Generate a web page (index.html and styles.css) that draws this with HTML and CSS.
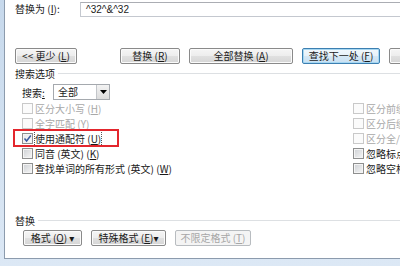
FILE: index.html
```html
<!DOCTYPE html>
<html lang="zh-CN">
<head>
    <meta charset="UTF-8">
    <meta name="viewport" content="width=device-width, initial-scale=1.0">
    <title>查找和替换</title>
    <link rel="stylesheet" href="styles.css">
</head>
<body>
    <div class="dialog">
        <div class="replace-row">
            <label class="field-label">替换为 (<u>I</u>):</label>
            <div class="textbox">^32^&amp;^32</div>
        </div>

        <div class="button-row">
            <button class="btn btn-more">&lt;&lt; 更少 (<u>L</u>)</button>
            <button class="btn btn-replace">替换 (<u>R</u>)</button>
            <button class="btn btn-all">全部替换 (<u>A</u>)</button>
            <button class="btn btn-next btn-default">查找下一处 (<u>F</u>)</button>
            <button class="btn btn-cancel" aria-label="取消"></button>
        </div>

        <div class="group-title">搜索选项</div>

        <div class="search-row">
            <span class="search-label">搜索<u>:</u></span>
            <div class="combo">
                <span class="combo-text">全部</span>
                <span class="combo-btn">
                    <svg width="7" height="4" viewBox="0 0 7 4"><path d="M0 0h7L3.5 4z" fill="#000"/></svg>
                </span>
            </div>
        </div>

        <div class="options">
            <div class="col col-left">
                <div class="opt disabled"><span class="cb"></span>区分大小写 (<u>H</u>)</div>
                <div class="opt disabled"><span class="cb"></span>全字匹配 (<u>Y</u>)</div>
                <div class="opt marked">
                    <span class="cb checked">
                        <svg width="9" height="9" viewBox="0 0 9 9"><path d="M1.5 4.5L3.6 7L7.8 1.5" fill="none" stroke="#3a5a9e" stroke-width="1.5"/></svg>
                    </span>
                    <span class="focus">使用通配符 (<u>U</u>)</span>
                    <span class="highlight"></span>
                </div>
                <div class="opt"><span class="cb"></span>同音 (英文) (<u>K</u>)</div>
                <div class="opt"><span class="cb"></span>查找单词的所有形式 (英文) (<u>W</u>)</div>
            </div>
            <div class="col col-right">
                <div class="opt disabled"><span class="cb"></span>区分前缀 (<u>X</u>)</div>
                <div class="opt disabled"><span class="cb"></span>区分后缀 (<u>T</u>)</div>
                <div class="opt disabled"><span class="cb"></span>区分全/半角 (<u>M</u>)</div>
                <div class="opt"><span class="cb"></span>忽略标点符号 (<u>S</u>)</div>
                <div class="opt"><span class="cb"></span>忽略空格 (<u>W</u>)</div>
            </div>
        </div>

        <div class="group-title group-replace">替换</div>

        <div class="format-row">
            <button class="btn btn-format">格式 (<u>O</u>) ▾</button>
            <button class="btn btn-special">特殊格式 (<u>E</u>)▾</button>
            <button class="btn btn-noformat" disabled>不限定格式 (<u>T</u>)</button>
        </div>
    </div>
</body>
</html>
```

FILE: styles.css
```css
/* Word find & replace dialog, Win7 look */
body {
    margin: 0;
    width: 400px;
    height: 266px;
    overflow: hidden;
    background: linear-gradient(#c7d9ec, #dce8f5);
    font-family: "Noto Sans CJK SC", "DejaVu Sans", sans-serif;
    font-size: 10px;
    color: #1a1a1a;
}

u {
    text-decoration: underline;
}

.dialog {
    box-sizing: border-box;
    height: 259px;
    margin-left: 4px;
    padding-left: 10px;
    background: #fff;
    border-left: 1px solid #8c9bad;
    border-bottom: 1px solid #8c9bad;
    overflow: hidden;
}

.replace-row {
    display: flex;
    align-items: center;
    height: 16px;
    margin-top: 1px;
}

.field-label {
    width: 65px;
    flex-shrink: 0;
    line-height: 16px;
}

.textbox {
    box-sizing: border-box;
    width: 340px;
    height: 15px;
    flex-shrink: 0;
    padding-left: 5px;
    border: 1px solid #c4c8cf;
    border-top-color: #abadb3;
    font-family: "Liberation Sans", Arial, sans-serif;
    font-size: 10px;
    line-height: 13px;
    white-space: nowrap;
}

.button-row {
    display: flex;
    gap: 9px;
    margin-top: 31px;
    white-space: nowrap;
}

.btn {
    box-sizing: border-box;
    height: 16px;
    padding: 0;
    flex-shrink: 0;
    border: 1px solid #8a8a8a;
    border-radius: 2px;
    background: linear-gradient(#f5f5f5 0%, #ededed 50%, #e0e0e0 50%, #d6d6d6 100%);
    box-shadow: inset 0 0 0 1px #fbfbfb;
    font-family: inherit;
    font-size: 10px;
    line-height: 14px;
    color: #1a1a1a;
    text-align: center;
}

.btn-more {
    width: 62px;
    margin-right: 34px;
}

.btn-replace {
    width: 60px;
}

.btn-all {
    width: 104px;
}

.btn-next {
    width: 78px;
}

.btn-cancel {
    width: 60px;
}

.btn-default {
    border-color: #3c7fb1;
    background: linear-gradient(#f2f8fc 0%, #e7f1f9 50%, #d6e8f5 50%, #c9e0f2 100%);
    box-shadow: inset 0 0 0 1px #a6d7f2;
}

.btn:disabled {
    border-color: #b8bcc0;
    background: #f4f4f4;
    box-shadow: none;
    color: #a6a6a6;
}

.group-title {
    display: flex;
    align-items: center;
    height: 14px;
    margin-top: 2px;
    white-space: nowrap;
}

.group-title::after {
    content: "";
    flex: 1;
    margin-left: 3px;
    border-top: 1px solid #dde0e3;
}

.search-row {
    display: flex;
    align-items: center;
    height: 16px;
    margin-top: 4px;
    padding-left: 7px;
}

.search-label {
    width: 31px;
}

.combo {
    box-sizing: border-box;
    display: flex;
    width: 57px;
    height: 16px;
    border: 1px solid #a5a9ae;
}

.combo-text {
    flex: 1;
    padding-left: 4px;
    line-height: 14px;
}

.combo-btn {
    box-sizing: border-box;
    display: flex;
    align-items: center;
    justify-content: center;
    width: 13px;
    border-left: 1px solid #c3c6ca;
    background: linear-gradient(#f3f3f3, #dcdcdc);
}

.options {
    display: flex;
    margin-top: 1px;
    padding-left: 7px;
    white-space: nowrap;
}

.col-left {
    width: 331px;
    flex-shrink: 0;
}

.opt {
    position: relative;
    display: flex;
    align-items: center;
    height: 15px;
}

.opt.disabled {
    color: #a8a8a8;
}

.cb {
    box-sizing: border-box;
    display: flex;
    align-items: center;
    justify-content: center;
    width: 11px;
    height: 11px;
    margin-right: 2px;
    flex-shrink: 0;
    border: 1px solid #8e8f8f;
    background: linear-gradient(135deg, #cdd0d4, #f6f6f6);
    box-shadow: inset 0 0 0 1px #f4f4f4;
}

.disabled .cb {
    border-color: #c9c9c9;
    background: #fbfbfb;
    box-shadow: none;
}

.cb.checked {
    background: linear-gradient(135deg, #e4e6ea, #fbfbfb);
}

.focus {
    outline: 1px dotted #555;
    outline-offset: 0;
}

/* red annotation around the wildcard option */
.highlight {
    position: absolute;
    left: -9px;
    top: -2px;
    width: 106px;
    height: 18px;
    box-sizing: border-box;
    border: 2px solid #e3262d;
}

.group-replace {
    height: 14px;
    margin-top: 37px;
}

.format-row {
    display: flex;
    gap: 9px;
    margin-top: 3px;
    padding-left: 8px;
    white-space: nowrap;
}

.btn-format {
    width: 59px;
}

.btn-special {
    width: 75px;
}

.btn-noformat {
    width: 76px;
}
```
